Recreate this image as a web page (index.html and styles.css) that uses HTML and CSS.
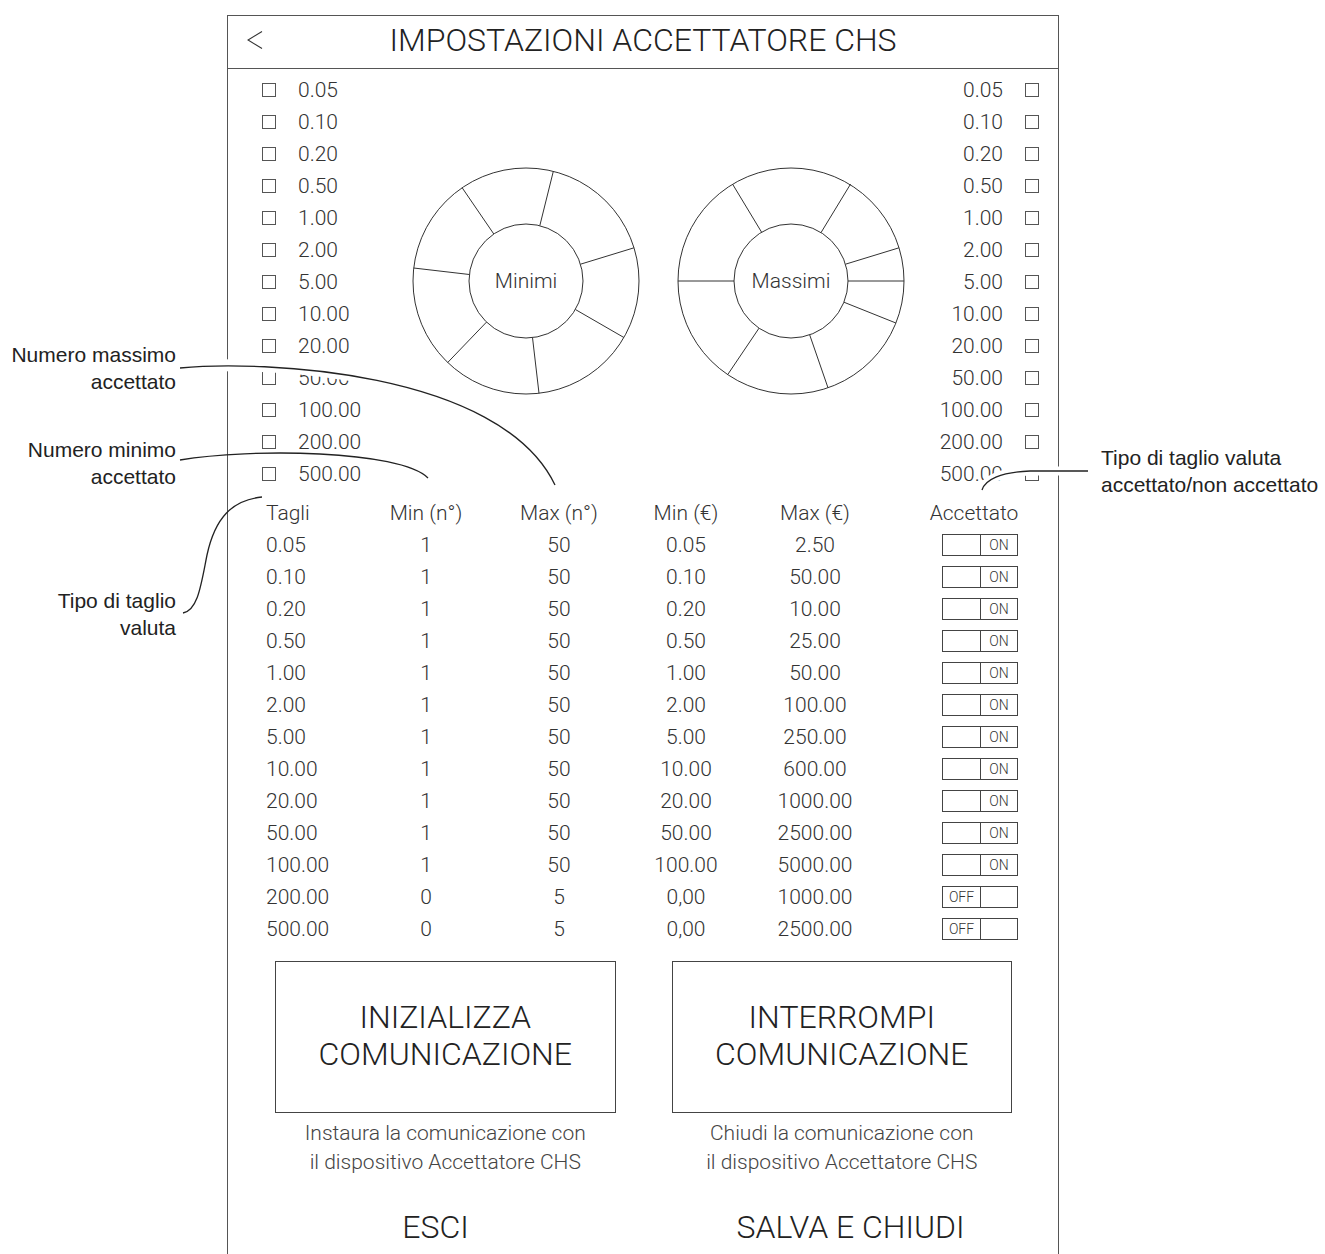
FILE: index.html
```html
<!DOCTYPE html>
<html lang="it">
<head>
<meta charset="utf-8">
<title>Impostazioni Accettatore CHS</title>
<link rel="stylesheet" href="styles.css">
</head>
<body>
<div class="page">
  <div class="frame">
    <header class="hdr">
      <span class="back"><svg width="16" height="18" viewBox="0 0 16 18"><polyline points="15,0.5 1,9 15,17.5" fill="none" stroke="#333" stroke-width="1.1"/></svg></span>
      <h1 class="title">IMPOSTAZIONI ACCETTATORE CHS</h1>
      <span></span>
    </header>

    <section class="top">
      <ul class="clist left">
        <li><span class="cb"></span><span>0.05</span></li>
        <li><span class="cb"></span><span>0.10</span></li>
        <li><span class="cb"></span><span>0.20</span></li>
        <li><span class="cb"></span><span>0.50</span></li>
        <li><span class="cb"></span><span>1.00</span></li>
        <li><span class="cb"></span><span>2.00</span></li>
        <li><span class="cb"></span><span>5.00</span></li>
        <li><span class="cb"></span><span>10.00</span></li>
        <li><span class="cb"></span><span>20.00</span></li>
        <li><span class="cb"></span><span>50.00</span></li>
        <li><span class="cb"></span><span>100.00</span></li>
        <li><span class="cb"></span><span>200.00</span></li>
        <li><span class="cb"></span><span>500.00</span></li>
      </ul>
      <svg class="wheels" width="520" height="421" viewBox="400 69 520 421">
        <g fill="none" stroke="#333" stroke-width="1">
          <circle cx="526" cy="281" r="113"/>
          <circle cx="526" cy="281" r="57"/>
          <line x1="462.2" y1="187.8" x2="493.8" y2="234"/>
          <line x1="553.3" y1="171.4" x2="539.8" y2="225.7"/>
          <line x1="634" y1="247.8" x2="580.5" y2="264.2"/>
          <line x1="623.9" y1="337.5" x2="575.4" y2="309.5"/>
          <line x1="539" y1="393.3" x2="532.5" y2="337.6"/>
          <line x1="447.7" y1="362.5" x2="486.5" y2="322.1"/>
          <line x1="413.7" y1="268" x2="469.4" y2="274.5"/>

          <circle cx="791" cy="281" r="113"/>
          <circle cx="791" cy="281" r="57"/>
          <line x1="732.6" y1="184.2" x2="761.6" y2="232.2"/>
          <line x1="850.6" y1="184" x2="821" y2="232.6"/>
          <line x1="899" y1="247.8" x2="845.5" y2="264.2"/>
          <line x1="904" y1="281" x2="848" y2="281"/>
          <line x1="895.9" y1="323" x2="843.9" y2="302.2"/>
          <line x1="828" y1="387.8" x2="809.7" y2="334.9"/>
          <line x1="727.7" y1="374.6" x2="759" y2="328.2"/>
          <line x1="678" y1="281" x2="734" y2="281"/>
        </g>
        <text x="526" y="288" class="wlabel" text-anchor="middle">Minimi</text>
        <text x="791" y="288" class="wlabel" text-anchor="middle">Massimi</text>
      </svg>
      <ul class="clist right">
        <li><span>0.05</span><span class="cb"></span></li>
        <li><span>0.10</span><span class="cb"></span></li>
        <li><span>0.20</span><span class="cb"></span></li>
        <li><span>0.50</span><span class="cb"></span></li>
        <li><span>1.00</span><span class="cb"></span></li>
        <li><span>2.00</span><span class="cb"></span></li>
        <li><span>5.00</span><span class="cb"></span></li>
        <li><span>10.00</span><span class="cb"></span></li>
        <li><span>20.00</span><span class="cb"></span></li>
        <li><span>50.00</span><span class="cb"></span></li>
        <li><span>100.00</span><span class="cb"></span></li>
        <li><span>200.00</span><span class="cb"></span></li>
        <li><span>500.00</span><span class="cb"></span></li>
      </ul>
    </section>

    <div class="table">
      <div class="th l">Tagli</div><div class="th">Min (n°)</div><div class="th">Max (n°)</div><div class="th">Min (€)</div><div class="th">Max (€)</div><div class="th">Accettato</div>

      <div class="l">0.05</div><div>1</div><div>50</div><div>0.05</div><div>2.50</div><div><span class="tg on"><i></i><i>ON</i></span></div>
      <div class="l">0.10</div><div>1</div><div>50</div><div>0.10</div><div>50.00</div><div><span class="tg on"><i></i><i>ON</i></span></div>
      <div class="l">0.20</div><div>1</div><div>50</div><div>0.20</div><div>10.00</div><div><span class="tg on"><i></i><i>ON</i></span></div>
      <div class="l">0.50</div><div>1</div><div>50</div><div>0.50</div><div>25.00</div><div><span class="tg on"><i></i><i>ON</i></span></div>
      <div class="l">1.00</div><div>1</div><div>50</div><div>1.00</div><div>50.00</div><div><span class="tg on"><i></i><i>ON</i></span></div>
      <div class="l">2.00</div><div>1</div><div>50</div><div>2.00</div><div>100.00</div><div><span class="tg on"><i></i><i>ON</i></span></div>
      <div class="l">5.00</div><div>1</div><div>50</div><div>5.00</div><div>250.00</div><div><span class="tg on"><i></i><i>ON</i></span></div>
      <div class="l">10.00</div><div>1</div><div>50</div><div>10.00</div><div>600.00</div><div><span class="tg on"><i></i><i>ON</i></span></div>
      <div class="l">20.00</div><div>1</div><div>50</div><div>20.00</div><div>1000.00</div><div><span class="tg on"><i></i><i>ON</i></span></div>
      <div class="l">50.00</div><div>1</div><div>50</div><div>50.00</div><div>2500.00</div><div><span class="tg on"><i></i><i>ON</i></span></div>
      <div class="l">100.00</div><div>1</div><div>50</div><div>100.00</div><div>5000.00</div><div><span class="tg on"><i></i><i>ON</i></span></div>
      <div class="l">200.00</div><div>0</div><div>5</div><div>0,00</div><div>1000.00</div><div><span class="tg off"><i>OFF</i><i></i></span></div>
      <div class="l">500.00</div><div>0</div><div>5</div><div>0,00</div><div>2500.00</div><div><span class="tg off"><i>OFF</i><i></i></span></div>
    </div>

    <div class="actions">
      <div class="act">
        <div class="btn">INIZIALIZZA<br>COMUNICAZIONE</div>
        <p class="cap">Instaura la comunicazione con<br>il dispositivo Accettatore CHS</p>
      </div>
      <div class="act">
        <div class="btn">INTERROMPI<br>COMUNICAZIONE</div>
        <p class="cap">Chiudi la comunicazione con<br>il dispositivo Accettatore CHS</p>
      </div>
    </div>

    <div class="foot">
      <div class="fbtn">ESCI</div>
      <div class="fbtn">SALVA E CHIUDI</div>
    </div>
  </div>

  <div class="note nl n1">Numero massimo<br>accettato</div>
  <div class="note nl n2">Numero minimo<br>accettato</div>
  <div class="note nl n3">Tipo di taglio<br>valuta</div>
  <div class="note nr">Tipo di taglio valuta<br>accettato/non accettato</div>

  <svg class="leaders" width="1325" height="1254" viewBox="0 0 1325 1254">
    <g fill="none" stroke="#fff" stroke-linecap="butt">
      <path d="M190 367 C 260 360, 500 370, 555 485" stroke-width="12"/>
      <path d="M1086 471 L 1030 471 C 1000 472, 985 480, 982 490" stroke-width="9"/>
    </g>
    <g fill="none" stroke="#222" stroke-width="1.3">
      <path d="M180 368 C 260 360, 500 370, 555 485"/>
      <path d="M180 460 C 250 448, 400 450, 428 478"/>
      <path d="M183 613 C 198 610, 201 585, 207 555 C 215 518, 232 500, 262 497"/>
      <path d="M1088 471 L 1030 471 C 1000 472, 985 480, 982 490"/>
    </g>
  </svg>
</div>
</body>
</html>
```
FILE: styles.css
```css
* { box-sizing: border-box; }

body {
  margin: 0;
  background: #fff;
  font-family: Roboto, "Noto Sans", sans-serif;
  font-weight: 300;
  color: #333;
}

.page {
  position: relative;
  width: 1325px;
  height: 1254px;
  overflow: hidden;
}

.frame {
  margin: 15px 0 0 227px;
  width: 832px;
  height: 1239px;
  border: 1px solid #555;
  border-bottom: none;
}

/* header */
.hdr {
  height: 53px;
  border-bottom: 1px solid #555;
  display: grid;
  grid-template-columns: 1fr auto 1fr;
  align-items: center;
}

.back {
  padding-left: 19px;
  padding-bottom: 4px;
  line-height: 0;
}

.title {
  margin: 0 0 4px;
  font-size: 32px;
  font-weight: 300;
  line-height: 1;
  color: #222;
  white-space: nowrap;
}

/* top section with checkbox lists and wheels */
.top {
  display: flex;
  height: 421px;
}

.clist {
  list-style: none;
  margin: 0;
  padding: 5px 0 0;
}

.clist li {
  display: flex;
  align-items: center;
  gap: 22px;
  height: 32px;
  font-size: 21px;
  color: #333;
}

.left {
  width: 172px;
  padding-left: 34px;
}

.right {
  flex: 1;
  padding-right: 19px;
}

.right li {
  justify-content: flex-end;
}

.cb {
  width: 14px;
  height: 14px;
  border: 1px solid #555;
  flex: none;
}

.wheels {
  flex: none;
  display: block;
}

.wlabel {
  font-family: Roboto, sans-serif;
  font-weight: 300;
  font-size: 21px;
  fill: #333;
}

/* table */
.table {
  margin-top: 7px;
  padding-left: 38px;
  display: grid;
  grid-template-columns: 100px 120px 146px 108px 150px 1fr;
  grid-auto-rows: 32px;
  font-size: 21px;
  color: #333;
}

.table > div {
  display: flex;
  align-items: center;
  justify-content: center;
}

.table > div.l {
  justify-content: flex-start;
}

.tg {
  display: grid;
  grid-template-columns: 1fr 1fr;
  width: 76px;
  height: 22px;
  border: 1px solid #444;
  margin-left: 12px;
}

.tg i {
  font-style: normal;
  font-size: 14px;
  line-height: 20px;
  text-align: center;
  color: #333;
}

.tg i + i {
  border-left: 1px solid #444;
}

/* action buttons */
.actions {
  margin-top: 16px;
  padding: 0 46px 0 47px;
  display: flex;
  gap: 56px;
}

.act {
  flex: 1;
  display: flex;
  flex-direction: column;
  align-items: center;
}

.btn {
  width: 100%;
  height: 152px;
  padding-bottom: 3px;
  border: 1px solid #444;
  display: flex;
  align-items: center;
  justify-content: center;
  text-align: center;
  font-size: 32px;
  line-height: 37px;
  color: #222;
}

.cap {
  margin: 6px 0 0;
  font-size: 21px;
  line-height: 29px;
  text-align: center;
  color: #444;
}

/* footer */
.foot {
  margin-top: 30px;
  display: grid;
  grid-template-columns: 1fr 1fr;
}

.fbtn {
  text-align: center;
  font-size: 32px;
  line-height: 40px;
  color: #222;
}

/* annotations */
.note {
  position: absolute;
  font-family: "Liberation Sans", Arial, sans-serif;
  font-weight: 400;
  font-size: 21px;
  line-height: 27px;
  color: #222;
  white-space: nowrap;
}

.nl {
  left: 0;
  width: 176px;
  text-align: right;
}

.n1 { top: 341px; }
.n2 { top: 436px; }
.n3 { top: 587px; }

.nr {
  left: 1101px;
  top: 444px;
}

.leaders {
  position: absolute;
  left: 0;
  top: 0;
  pointer-events: none;
}
```
